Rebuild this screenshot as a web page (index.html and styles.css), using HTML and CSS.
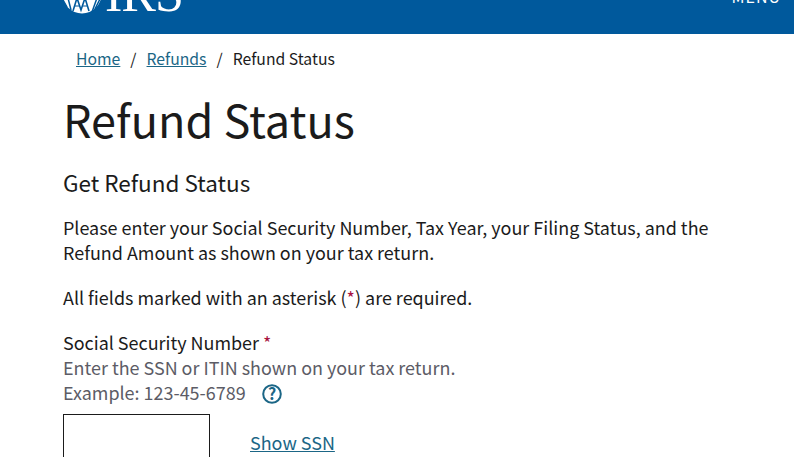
FILE: index.html
```html
<!DOCTYPE html>
<html lang="en">
<head>
    <meta charset="UTF-8">
    <meta name="viewport" content="width=device-width, initial-scale=1.0">
    <title>Refund Status</title>
    <link rel="stylesheet" href="styles.css">
</head>
<body>

    <header class="site-header">
        <div class="logo">
            <svg class="logo-seal" width="40" height="40" viewBox="0 0 40 40" aria-hidden="true">
                <circle cx="20" cy="20" r="19.5" fill="#fff"/>
                <path d="M1 26 L5 33 M6 24 L9 36 M30 38 L35 24 M33 35 L38 25" fill="none" stroke="#00599c" stroke-width="1.5"/>
                <path d="M11 37 L15 24 L19 36 L23 24 L27 37" fill="none" stroke="#00599c" stroke-width="1.6"/>
                <path d="M13 32 L17 32 M21 32 L25 32" fill="none" stroke="#00599c" stroke-width="1.2"/>
            </svg>
            <span class="logo-text">IRS</span>
        </div>
        <span class="menu-label">MENU</span>
    </header>

    <nav class="breadcrumb">
        <a href="#">Home</a>
        <span class="sep">/</span>
        <a href="#">Refunds</a>
        <span class="sep">/</span>
        <span>Refund Status</span>
    </nav>

    <main class="content">
        <h1>Refund Status</h1>
        <h2>Get Refund Status</h2>

        <p class="intro">Please enter your Social Security Number, Tax Year, your Filing Status, and the Refund Amount as shown on your tax return.</p>
        <p class="required-note">All fields marked with an asterisk (<span class="asterisk">*</span>) are required.</p>

        <div class="field">
            <label for="ssn">Social Security Number <span class="asterisk">*</span></label>
            <div class="hint">Enter the SSN or ITIN shown on your tax return.</div>
            <div class="hint">Example: 123-45-6789
                <svg class="help-icon" width="20" height="20" viewBox="0 0 20 20" aria-hidden="true">
                    <circle cx="10" cy="10" r="8.8" fill="none" stroke="#1b6686" stroke-width="2"/>
                    <text x="10" y="15.5" text-anchor="middle" class="help-mark">?</text>
                </svg>
            </div>
            <div class="ssn-row">
                <input type="text" id="ssn" class="ssn-input">
                <a href="#" class="show-ssn">Show SSN</a>
            </div>
        </div>
    </main>

</body>
</html>
```

FILE: styles.css
```css
html, body {
    height: 457px;
    overflow: hidden;
}

body {
    margin: 0;
    padding: 0;
    font-family: "Noto Sans CJK SC", "Noto Sans", sans-serif;
    background-color: #fff;
    color: #1b1b1b;
    font-size: 18px;
}

a {
    color: #1b6686;
}

.site-header {
    height: 34px;
    box-sizing: border-box;
    overflow: hidden;
    background-color: #00599c;
    display: flex;
    justify-content: space-between;
    align-items: flex-end;
    padding: 0 13px 20px 62px;
}

.logo {
    display: flex;
    align-items: flex-end;
    gap: 3px;
    height: 40px;
    flex-shrink: 0;
}

.logo-text {
    font-family: "Liberation Serif", serif;
    font-size: 52px;
    line-height: 40px;
    color: #fff;
    letter-spacing: -1px;
}

.menu-label {
    color: #fff;
    font-size: 16px;
    line-height: 20px;
    letter-spacing: 1px;
    margin-bottom: 8px;
}

.breadcrumb {
    display: flex;
    gap: 10px;
    padding: 13px 0 0 76px;
    font-size: 15.75px;
    line-height: 23px;
}

.content {
    padding: 0 63px;
}

h1 {
    margin: 19px 0 0;
    font-size: 45px;
    font-weight: 400;
    line-height: 60px;
}

h2 {
    margin: 18px 0 0;
    font-size: 22.5px;
    font-weight: 400;
    line-height: 30px;
}

.intro {
    margin: 18px 0 0;
    font-size: 17.95px;
    line-height: 25px;
}

.required-note {
    margin: 20px 0 0;
    font-size: 17.95px;
    line-height: 25px;
}

.asterisk {
    color: #a8123e;
}

.field {
    margin-top: 20px;
    font-size: 17.95px;
    line-height: 25px;
}

.hint {
    color: #5c5c66;
}

.help-icon {
    vertical-align: -4px;
    margin-left: 12px;
}

.help-mark {
    font-size: 16px;
    font-weight: 700;
    fill: #1b6686;
}

.ssn-row {
    display: flex;
    align-items: center;
    gap: 40px;
    margin-top: 9px;
}

.ssn-input {
    width: 147px;
    height: 56px;
    box-sizing: border-box;
    border: 1px solid #1b1b1b;
    border-radius: 0;
    padding: 0;
}

.show-ssn {
    font-size: 17.95px;
}
```
